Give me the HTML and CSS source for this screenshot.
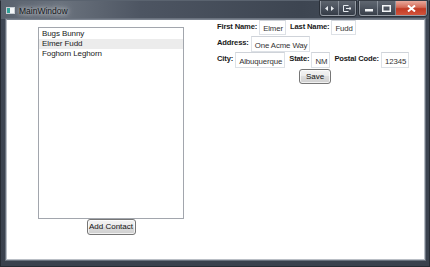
FILE: index.html
```html
<!DOCTYPE html>
<html>
<head>
<meta charset="utf-8">
<link rel="stylesheet" href="styles.css">
</head>
<body>
<div class="window">
  <div class="titlebar">
    <svg class="app-icon" width="9" height="7" viewBox="0 0 9 7">
      <rect x="0.5" y="0.5" width="8" height="6" fill="#f4f6f8" stroke="#c9ced4"/>
      <rect x="1" y="1" width="3" height="5" fill="#2fa39a"/>
    </svg>
    <span class="title">MainWindow</span>
    <div class="caption-group extra">
      <span class="cap">
        <svg width="9" height="5" viewBox="0 0 9 5"><polygon points="0,2.5 3,0 3,5" fill="#e8ecf0"/><polygon points="9,2.5 6,0 6,5" fill="#e8ecf0"/></svg>
      </span>
      <span class="cap">
        <svg width="8" height="7" viewBox="0 0 8 7"><path d="M5.5 0.5H0.5V6.5H5.5M3 3.5H8M6.5 2L8 3.5L6.5 5" fill="none" stroke="#e8ecf0" stroke-width="1"/></svg>
      </span>
    </div>
    <div class="caption-group main">
      <span class="cap min"><svg width="8" height="7" viewBox="0 0 8 7"><rect x="0" y="4" width="8" height="2.5" fill="#f4f6f8"/></svg></span>
      <span class="cap max"><svg width="9" height="7" viewBox="0 0 9 7"><rect x="0.75" y="0.75" width="7.5" height="5.5" fill="none" stroke="#f4f6f8" stroke-width="1.5"/></svg></span>
      <span class="cap close"><svg width="9" height="7" viewBox="0 0 9 7"><path d="M1 0.5L8 6.5M8 0.5L1 6.5" stroke="#ffffff" stroke-width="2"/></svg></span>
    </div>
  </div>
  <div class="client">
    <div class="contacts">
      <ul class="listbox">
        <li class="item">Bugs Bunny</li>
        <li class="item selected">Elmer Fudd</li>
        <li class="item">Foghorn Leghorn</li>
      </ul>
      <button class="btn add">Add Contact</button>
    </div>
    <div class="details">
      <div class="row">
        <span class="lbl">First Name:</span><span class="tb">Elmer</span>
        <span class="lbl">Last Name:</span><span class="tb">Fudd</span>
      </div>
      <div class="row">
        <span class="lbl">Address:</span><span class="tb">One Acme Way</span>
      </div>
      <div class="row">
        <span class="lbl">City:</span><span class="tb">Albuquerque</span>
        <span class="lbl">State:</span><span class="tb">NM</span>
        <span class="lbl">Postal Code:</span><span class="tb">12345</span>
      </div>
      <button class="btn save">Save</button>
    </div>
  </div>
</div>
</body>
</html>
```

FILE: styles.css
```css
html, body {
  margin: 0;
  padding: 0;
  background: #ffffff;
}
.window {
  width: 430px;
  height: 267px;
  box-sizing: border-box;
  display: flex;
  flex-direction: column;
  background: linear-gradient(180deg, #4d5663 0px, #3f4754 18px, #3a414d 100%);
  border: 1px solid #262b33;
  border-top-color: #5a636f;
  font-family: "Liberation Sans", Arial, sans-serif;
}
.titlebar {
  height: 18px;
  display: flex;
  align-items: flex-start;
  padding-left: 5px;
  background: linear-gradient(90deg, #59616d 0px, #6a727d 60px, #4d5562 140px, #3d4551 300px, #48505c 430px);
}
.app-icon {
  margin-top: 6px;
  flex: none;
}
.title {
  margin-left: 4px;
  margin-top: 5px;
  font-size: 8.5px;
  line-height: 10px;
  color: #15181c;
  text-shadow: 0 0 4px rgba(255,255,255,0.9), 0 0 8px rgba(255,255,255,0.6);
}
.caption-group {
  display: flex;
  height: 15px;
  box-sizing: border-box;
  border: 1px solid rgba(200, 206, 214, 0.55);
  border-top: none;
  border-radius: 0 0 3px 3px;
  overflow: hidden;
  background: linear-gradient(180deg, rgba(255,255,255,0.16), rgba(255,255,255,0.05) 50%, rgba(0,0,0,0.15));
  box-shadow: 0 0 0 1px rgba(20,24,30,0.5);
}
.caption-group.extra {
  margin-left: auto;
  width: 36px;
}
.caption-group.main {
  margin-left: 3px;
  margin-right: 2px;
  width: 68px;
}
.cap {
  display: flex;
  align-items: center;
  justify-content: center;
  flex: 1;
  border-right: 1px solid rgba(200, 206, 214, 0.45);
}
.cap:last-child {
  border-right: none;
}
.cap.min, .cap.max {
  flex: none;
  width: 17px;
}
.cap.close {
  flex: 1;
  background: linear-gradient(180deg, #e9a99c 0%, #d46b58 45%, #c23a24 55%, #d2543c 100%);
}
.client {
  flex: 1;
  display: flex;
  align-items: flex-start;
  margin: 0 4px 6px 5px;
  background: #ffffff;
  border: 1px solid #b9bec5;
  border-top-color: #7c8490;
  box-shadow: 0 0 0 1px #6a727e;
  font-size: 8px;
  color: #222;
}
.contacts {
  flex: none;
  margin-left: 31px;
  margin-top: 7px;
  width: 146px;
  display: flex;
  flex-direction: column;
  align-items: center;
}
.listbox {
  list-style: none;
  margin: 0;
  padding: 1px 0 0 0;
  width: 146px;
  height: 192px;
  box-sizing: border-box;
  border: 1px solid #a2a6ad;
}
.item {
  height: 10px;
  line-height: 10px;
  padding-left: 3px;
  color: #1a1a1a;
  letter-spacing: -0.1px;
}
.item.selected {
  background: #ececec;
}
.btn {
  font-family: "Liberation Sans", Arial, sans-serif;
  font-size: 8px;
  color: #111;
  border: 1px solid #767676;
  border-radius: 3px;
  background: linear-gradient(180deg, #f3f3f3 0%, #ebebeb 50%, #dddddd 50%, #cfcfcf 100%);
  box-shadow: inset 0 0 0 1px rgba(255,255,255,0.7);
  padding: 0;
  margin: 0;
  height: 16px;
  line-height: 14px;
  white-space: nowrap;
}
.btn.add {
  width: 49px;
}
.details {
  flex: none;
  margin-left: 33px;
  display: flex;
  flex-direction: column;
  align-items: flex-start;
  white-space: nowrap;
}
.row {
  display: flex;
  align-items: flex-start;
  height: 16px;
}
.lbl {
  flex: none;
  font-weight: bold;
  color: #1a1a1a;
  font-size: 7.6px;
  letter-spacing: -0.15px;
  line-height: 10px;
  padding-top: 2px;
  margin-right: 2px;
}
.tb {
  flex: none;
  box-sizing: border-box;
  height: 16px;
  line-height: 15px;
  padding: 1px 2px 0 3px;
  border: 1px solid #dde1e6;
  border-top-color: #cfd3d9;
  color: #333;
  font-size: 7.8px;
  letter-spacing: -0.1px;
  margin-right: 4px;
}
.row:first-child .tb {
  height: 15px;
  line-height: 14px;
}
.btn.save {
  align-self: center;
  margin-top: 1px;
  width: 32px;
  height: 15px;
  line-height: 13px;
}
```
